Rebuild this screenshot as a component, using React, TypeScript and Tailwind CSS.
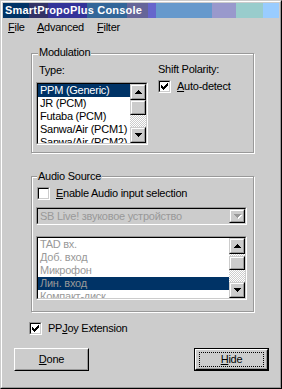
import React from "react";

const checker =
  "bg-[image:conic-gradient(#ffffff_25%,#cccccc_0_50%,#ffffff_0_75%,#cccccc_0)] bg-[length:2px_2px]";

function Arrow({ dir, disabled }: { dir: "up" | "down"; disabled?: boolean }) {
  const up = "M3 0h1v1H3zM2 1h3v1H2zM1 2h5v1H1zM0 3h7v1H0z";
  const down = "M0 0h7v1H0zM1 1h5v1H1zM2 2h3v1H2zM3 3h1v1H3z";
  const d = dir === "up" ? up : down;
  return (
    <svg width="8" height="5" viewBox="0 0 8 5" shapeRendering="crispEdges" className="block">
      {disabled && <path d={d} fill="#ffffff" transform="translate(1,1)" />}
      <path d={d} fill={disabled ? "#999999" : "#000000"} />
    </svg>
  );
}

function Raised({ className, children }: { className: string; children?: React.ReactNode }) {
  return (
    <div className={`shrink-0 border border-t-[#cccccc] border-l-[#cccccc] border-r-black border-b-black ${className}`}>
      <div className="w-full h-full border border-t-white border-l-white border-r-[#999999] border-b-[#999999] bg-[#cccccc] flex items-center justify-center pl-[1px]">
        {children}
      </div>
    </div>
  );
}

function Sunken({
  className,
  inner,
  children,
}: {
  className: string;
  inner: string;
  children?: React.ReactNode;
}) {
  return (
    <div className={`shrink-0 border border-t-[#999999] border-l-[#999999] border-r-white border-b-white ${className}`}>
      <div className={`w-full h-full border border-t-black border-l-black border-r-[#cccccc] border-b-[#cccccc] ${inner}`}>
        {children}
      </div>
    </div>
  );
}

function Check({ checked }: { checked?: boolean }) {
  return (
    <Sunken className="w-[13px] h-[13px]" inner="bg-white flex items-center justify-center">
      {checked && (
        <svg width="7" height="7" viewBox="0 0 7 7" shapeRendering="crispEdges" className="block">
          <path
            d="M0 2h1v3H0zM1 3h1v3H1zM2 4h1v3H2zM3 3h1v3H3zM4 2h1v3H4zM5 1h1v3H5zM6 0h1v3H6z"
            fill="#000000"
          />
        </svg>
      )}
    </Sunken>
  );
}

function Scrollbar({ gapClass, thumbClass }: { gapClass: string; thumbClass: string }) {
  return (
    <div className="w-[16px] h-full flex flex-col shrink-0">
      <Raised className="h-[16px]">
        <Arrow dir="up" />
      </Raised>
      <div className={`${checker} ${gapClass} shrink-0`} />
      <Raised className={thumbClass} />
      <div className={`${checker} flex-1`} />
      <Raised className="h-[16px]">
        <Arrow dir="down" />
      </Raised>
    </div>
  );
}

function Group({
  label,
  className,
  labelClass,
  children,
}: {
  label: string;
  className: string;
  labelClass: string;
  children?: React.ReactNode;
}) {
  return (
    <div
      className={`relative shrink-0 border border-[#999999] shadow-[inset_1px_1px_0_#ffffff,1px_1px_0_#ffffff] ${className}`}
    >
      <span className={`absolute px-[1px] bg-[#cccccc] leading-[13px] whitespace-nowrap ${labelClass}`}>{label}</span>
      {children}
    </div>
  );
}

export default function App() {
  const modTypes = ["PPM (Generic)", "JR (PCM)", "Futaba (PCM)", "Sanwa/Air (PCM1)", "Sanwa/Air (PCM2)"];
  const inputs = ["TAD вх.", "Доб. вход", "Микрофон", "Лин. вход", "Компакт-диск"];
  return (
    <div className="w-[282px] h-[389px] border border-t-[#cccccc] border-l-[#cccccc] border-r-black border-b-black font-['Liberation_Sans',Arial,sans-serif] text-[11px] leading-[13px] tracking-[-0.25px] text-black">
      <div className="w-full h-full border border-t-white border-l-white border-r-[#999999] border-b-[#999999] bg-[#cccccc] p-[1px] flex flex-col">
        {/* Title bar */}
        <div className="h-[15px] shrink-0 bg-[linear-gradient(to_right,#003366_0_26px,#333366_26px_45px,#333399_45px_84px,#336699_84px_124px,#666699_124px_145px,#6666cc_145px_153px,#6699cc_153px_209px,#9999cc_209px_233px,#99cccc_233px_260px,#99ccff_260px)] text-white font-bold tracking-[0.2px] pl-[2px] pt-[1px] whitespace-nowrap">
          SmartPropoPlus Console
        </div>

        {/* Menu bar */}
        <div className="h-[19px] shrink-0 flex pt-[3px] pl-[5px]">
          <span className="w-[29px]">
            <u>F</u>ile
          </span>
          <span className="w-[60px]">
            <u>A</u>dvanced
          </span>
          <span>
            <u>F</u>ilter
          </span>
        </div>

        {/* Modulation */}
        <Group label="Modulation" className="mt-[16px] ml-[28px] w-[223px] h-[100px]" labelClass="left-[6px] -top-[8px]">
          <div className="flex items-start">
            <div className="ml-[4px] pt-[10px] flex flex-col">
              <div className="pl-[3px]">Type:</div>
              <Sunken className="mt-[5px] w-[112px] h-[63px]" inner="flex bg-white">
                <div className="flex-1 overflow-hidden">
                  {modTypes.map((t, i) => (
                    <div
                      key={t}
                      className={`h-[13px] pl-[2px] whitespace-nowrap ${i === 0 ? "bg-[#003366] text-white" : "text-black"}`}
                    >
                      {t}
                    </div>
                  ))}
                </div>
                <Scrollbar gapClass="h-0" thumbClass="h-[15px]" />
              </Sunken>
            </div>
            <div className="ml-[10px] pt-[9px] flex flex-col">
              <div className="whitespace-nowrap">Shift Polarity:</div>
              <div className="mt-[4px] flex items-center h-[13px]">
                <Check checked />
                <span className="ml-[6px] whitespace-nowrap">
                  <u>A</u>uto-detect
                </span>
              </div>
            </div>
          </div>
        </Group>

        {/* Audio Source */}
        <Group label="Audio Source" className="mt-[23px] ml-[28px] w-[223px] h-[136px]" labelClass="left-[5px] -top-[7px]">
          <div className="flex flex-col">
            <div className="ml-[5px] mt-[10px] flex items-center h-[13px]">
              <Check />
              <span className="ml-[6px] whitespace-nowrap">
                <u>E</u>nable Audio input selection
              </span>
            </div>
            <Sunken className="ml-[4px] mt-[7px] w-[211px] h-[18px]" inner="flex bg-[#cccccc]">
              <div className="flex-1 pl-[2px] leading-[14px] text-[#999999] whitespace-nowrap overflow-hidden">
                SB Live! звуковое устройство
              </div>
              <Raised className="w-[16px] h-full">
                <Arrow dir="down" disabled />
              </Raised>
            </Sunken>
            <Sunken className="ml-[4px] mt-[11px] w-[211px] h-[64px]" inner="flex bg-white">
              <div className="flex-1 overflow-hidden">
                {inputs.map((t, i) => (
                  <div
                    key={t}
                    className={`h-[13px] pl-[2px] whitespace-nowrap text-[#999999] ${i === 3 ? "bg-[#003366]" : ""}`}
                  >
                    {t}
                  </div>
                ))}
              </div>
              <Scrollbar gapClass="h-[2px]" thumbClass="h-[14px]" />
            </Sunken>
          </div>
        </Group>

        {/* PPJoy */}
        <div className="mt-[10px] ml-[26px] flex items-center h-[13px] shrink-0">
          <Check checked />
          <span className="ml-[6px] whitespace-nowrap">
            PP<u>J</u>oy Extension
          </span>
        </div>

        {/* Buttons */}
        <div className="mt-[13px] pl-[11px] pr-[10px] flex justify-between shrink-0">
          <div className="w-[75px] h-[23px] border border-t-white border-l-white border-r-black border-b-black">
            <div className="w-full h-full border border-t-[#cccccc] border-l-[#cccccc] border-r-[#999999] border-b-[#999999] flex items-center justify-center">
              <span>
                <u>D</u>one
              </span>
            </div>
          </div>
          <div className="relative w-[75px] h-[23px] border border-black">
            <div className="w-full h-full border border-t-white border-l-white border-r-black border-b-black">
              <div className="w-full h-full border border-t-[#cccccc] border-l-[#cccccc] border-r-[#999999] border-b-[#999999] flex items-center justify-center">
                <span>
                  <u>H</u>ide
                </span>
              </div>
            </div>
            <div className="absolute left-[4px] right-[4px] top-[3px] bottom-[3px] border border-dotted border-black" />
          </div>
        </div>
      </div>
    </div>
  );
}
